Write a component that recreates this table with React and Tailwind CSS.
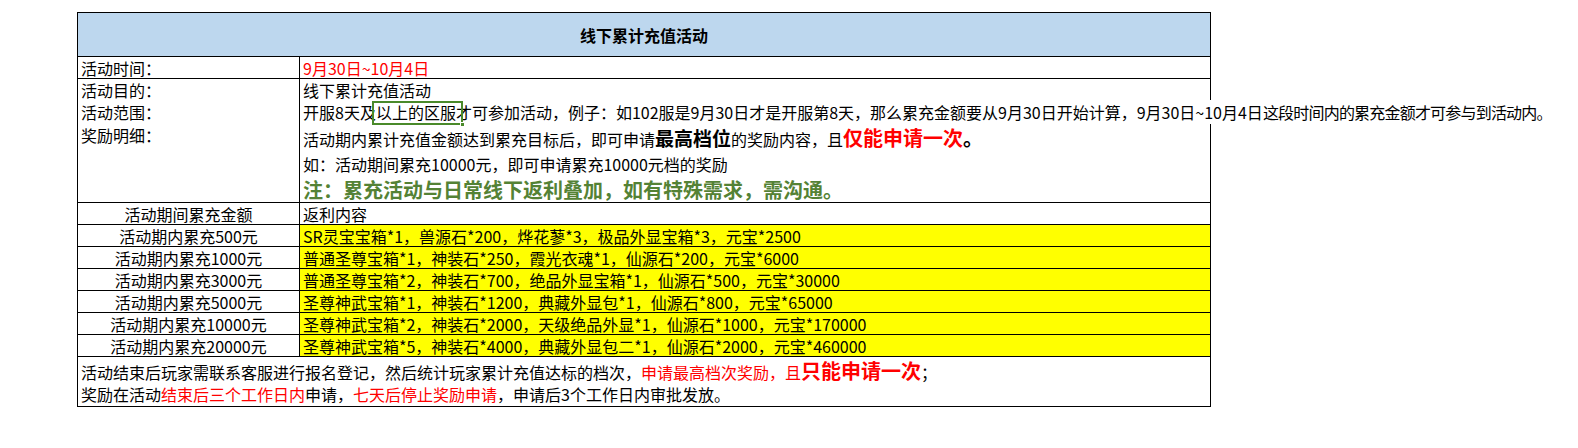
const tiers = [
  ['活动期内累充500元', 'SR灵宝宝箱*1，兽源石*200，烨花蓼*3，极品外显宝箱*3，元宝*2500'],
  ['活动期内累充1000元', '普通圣尊宝箱*1，神装石*250，霞光衣魂*1，仙源石*200，元宝*6000'],
  ['活动期内累充3000元', '普通圣尊宝箱*2，神装石*700，绝品外显宝箱*1，仙源石*500，元宝*30000'],
  ['活动期内累充5000元', '圣尊神武宝箱*1，神装石*1200，典藏外显包*1，仙源石*800，元宝*65000'],
  ['活动期内累充10000元', '圣尊神武宝箱*2，神装石*2000，天级绝品外显*1，仙源石*1000，元宝*170000'],
  ['活动期内累充20000元', '圣尊神武宝箱*5，神装石*4000，典藏外显包二*1，仙源石*2000，元宝*460000'],
];

const TierRow = ({ amount, reward, yellow }) => (
  <div className="flex h-[22px] border-b border-black">
    <div className="w-[222px] shrink-0 border-r border-black flex items-center justify-center leading-[22px]">
      {amount}
    </div>
    <div className={`flex-1 flex items-center pl-[3px] leading-[22px] ${yellow ? 'bg-[#ffff00]' : ''}`}>
      {reward}
    </div>
  </div>
);

export default function App() {
  return (
    <div className="h-[448px] bg-white pt-[12px] pl-[77px] font-['Noto_Sans_CJK_SC',sans-serif] text-[16px] text-black">
      <div className="w-[1134px] border border-black">
        {/* title */}
        <div className="h-[44px] border-b border-black bg-[#bdd7ee] flex items-center justify-center font-bold">
          线下累计充值活动
        </div>

        {/* time */}
        <div className="flex h-[22px] border-b border-black">
          <div className="w-[222px] shrink-0 border-r border-black pl-[3px] leading-[22px]">活动时间：</div>
          <div className="flex-1 pl-[3px] leading-[22px] text-[#ff0000]">9月30日~10月4日</div>
        </div>

        {/* details */}
        <div className="flex h-[124px] border-b border-black">
          <div className="w-[222px] shrink-0 border-r border-black pl-[3px]">
            <div className="leading-[22px]">活动目的：</div>
            <div className="leading-[23px]">活动范围：</div>
            <div className="leading-[23px]">奖励明细：</div>
          </div>
          <div className="flex-1 pl-[3px]">
            <div className="leading-[22px]">线下累计充值活动</div>
            <div className="leading-[23px] whitespace-nowrap">
              <span className="bg-white">
                开服8天及
                <span className="relative">
                  以上的区服
                  <span className="absolute -left-[4px] -right-[7px] top-[1px] -bottom-[1px] border-2 border-[#4a8a2a]" />
                  <span className="absolute -right-[9px] -bottom-[3px] w-[5px] h-[5px] bg-[#4a8a2a] border border-white" />
                </span>
                才可参加活动，例子：如102服是9月30日才是开服第8天，那么累充金额要从9月30日开始计算，9月30日~10月4日
                <span className="tracking-[-0.8px]">这段时间内的累充金额才可参与到活动内。</span>
              </span>
            </div>
            <div className="leading-[27px] whitespace-nowrap">
              活动期内累计充值金额达到累充目标后，即可申请
              <span className="text-[19px] font-bold">最高档位</span>
              的奖励内容，且
              <span className="text-[20px] font-bold text-[#ff0000]">仅能申请一次</span>
              <span className="text-[20px] font-bold">。</span>
            </div>
            <div className="leading-[23px]">如：活动期间累充10000元，即可申请累充10000元档的奖励</div>
            <div className="leading-[27px] text-[20px] font-bold text-[#548235]">
              注：累充活动与日常线下返利叠加，如有特殊需求，需沟通。
            </div>
          </div>
        </div>

        {/* tiers */}
        <TierRow amount="活动期间累充金额" reward="返利内容" />
        {tiers.map(([amount, reward]) => (
          <TierRow key={amount} amount={amount} reward={reward} yellow />
        ))}

        {/* footer */}
        <div className="h-[49px] pl-[3px] pt-[3px]">
          <div className="leading-[22px] whitespace-nowrap">
            活动结束后玩家需联系客服进行报名登记，然后统计玩家累计充值达标的档次，
            <span className="text-[#ff0000]">申请最高档次奖励，且</span>
            <span className="text-[20px] font-bold text-[#ff0000] leading-[22px]">只能申请一次</span>
            ；
          </div>
          <div className="leading-[22px] whitespace-nowrap">
            奖励在活动<span className="text-[#ff0000]">结束后三个工作日内</span>申请，
            <span className="text-[#ff0000]">七天后停止奖励申请</span>，申请后3个工作日内审批发放。
          </div>
        </div>
      </div>
    </div>
  );
}
